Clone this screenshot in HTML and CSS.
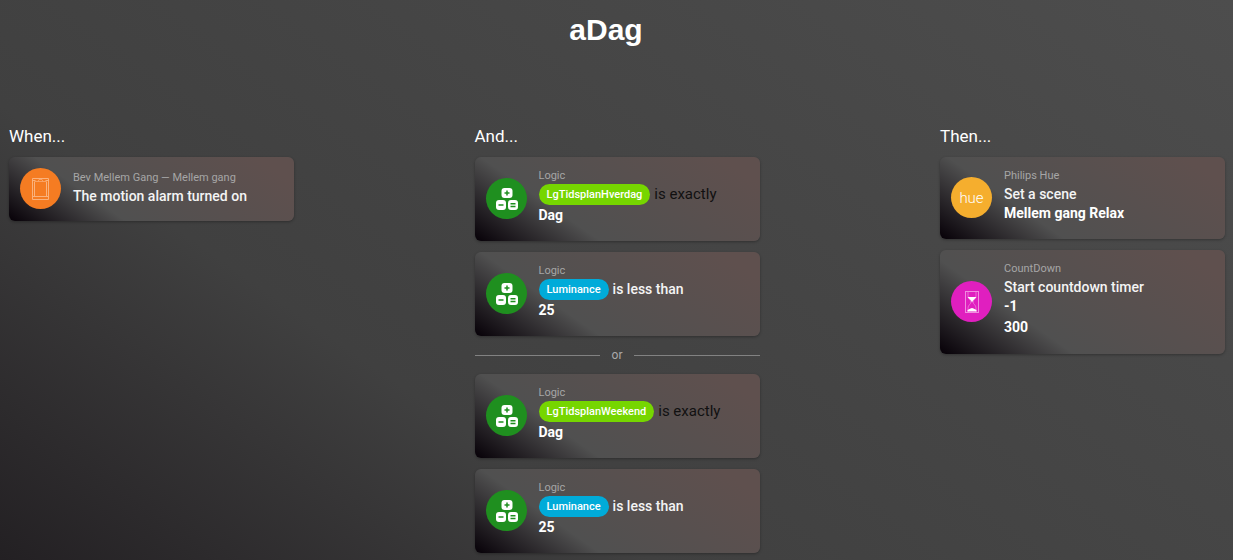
FILE: index.html
```html
<!DOCTYPE html>
<html lang="en">
<head>
    <meta charset="UTF-8">
    <meta name="viewport" content="width=device-width, initial-scale=1.0">
    <title>aDag</title>
    <link rel="stylesheet" href="styles.css">
</head>
<body>
    <!-- Calculator keys, shared by all logic cards -->
    <svg class="defs" aria-hidden="true">
        <symbol id="logicIcon" viewBox="0 0 41 41">
            <g fill="#fff">
                <rect x="15.500" y="10" width="11" height="10" rx="3"/>
                <rect x="10" y="22" width="10" height="10" rx="3"/>
                <rect x="22" y="22" width="10" height="10" rx="3"/>
            </g>
            <path d="M18.500 15h5M21 12.500v5M12.500 27h5M24.500 25.700h5M24.500 28.500h5" fill="none" stroke="#1f8f1f" stroke-width="1.500"/>
        </symbol>
    </svg>

    <h1>aDag</h1>

    <main class="flow">
        <!-- When -->
        <section class="column">
            <h2>When...</h2>
            <div class="card card-short">
                <div class="icon orange">
                    <svg viewBox="0 0 41 41" fill="none" stroke="#fab27c" stroke-width="1">
                        <path d="M12.500 10.500h16v21h-16zM14.500 13.500v15M26.500 13.500v15M12.500 28.500h16M12.500 12.500h3M25.500 12.500h3"/>
                        <path d="M15 13.500h11M18 13.500l1-2h3l1 2" stroke-width="0.700"/>
                    </svg>
                </div>
                <div class="text">
                    <div class="owner">Bev Mellem Gang — Mellem gang</div>
                    <div class="title">The motion alarm turned on</div>
                </div>
            </div>
        </section>

        <!-- And -->
        <section class="column">
            <h2>And...</h2>
            <div class="card">
                <div class="icon green"><svg><use href="#logicIcon"/></svg></div>
                <div class="text">
                    <div class="owner">Logic</div>
                    <div class="title token-row"><span class="token lime">LgTidsplanHverdag</span><span class="plain">is exactly</span></div>
                    <div class="arg">Dag</div>
                </div>
            </div>
            <div class="card">
                <div class="icon green"><svg><use href="#logicIcon"/></svg></div>
                <div class="text">
                    <div class="owner">Logic</div>
                    <div class="title token-row"><span class="token blue">Luminance</span><span>is less than</span></div>
                    <div class="arg">25</div>
                </div>
            </div>

            <div class="or">or</div>

            <div class="card">
                <div class="icon green"><svg><use href="#logicIcon"/></svg></div>
                <div class="text">
                    <div class="owner">Logic</div>
                    <div class="title token-row"><span class="token lime">LgTidsplanWeekend</span><span class="plain">is exactly</span></div>
                    <div class="arg">Dag</div>
                </div>
            </div>
            <div class="card">
                <div class="icon green"><svg><use href="#logicIcon"/></svg></div>
                <div class="text">
                    <div class="owner">Logic</div>
                    <div class="title token-row"><span class="token blue">Luminance</span><span>is less than</span></div>
                    <div class="arg">25</div>
                </div>
            </div>
        </section>

        <!-- Then -->
        <section class="column">
            <h2>Then...</h2>
            <div class="card">
                <div class="icon yellow"><span class="hue">hue</span></div>
                <div class="text">
                    <div class="owner">Philips Hue</div>
                    <div class="title">Set a scene</div>
                    <div class="arg">Mellem gang Relax</div>
                </div>
            </div>
            <div class="card">
                <div class="icon pink">
                    <svg viewBox="0 0 41 41">
                        <g fill="none" stroke="#f08be0" stroke-width="1">
                            <path d="M14 10.500h14M14 31.500h14M14.500 11v20M27.500 11v20"/>
                            <path d="M17 11v4c0 3 3 4 3 6s-3 3-3 6v4M25 11v4c0 3-3 4-3 6s3 3 3 6v4" stroke-width="0.700"/>
                        </g>
                        <path d="M16.500 16h9l-3.500 3.500-1 2-1-2zM16.500 30.500v-1.500l3-1.500 1.500-.5 1.500.5 3 1.500v1.500z" fill="#fff"/>
                    </svg>
                </div>
                <div class="text">
                    <div class="owner">CountDown</div>
                    <div class="title">Start countdown timer</div>
                    <div class="arg">-1</div>
                    <div class="arg arg-next">300</div>
                </div>
            </div>
        </section>
    </main>
</body>
</html>
```

FILE: styles.css
```css
* {
    box-sizing: border-box;
}
html {
    min-height: 100%;
    background: linear-gradient(35deg, #232023 0%, #404040 32%, #4d4d4d 100%);
}
body {
    margin: 0;
    padding: 12px 8px 7px 9px;
    font-family: Roboto, sans-serif;
    color: #fff;
}
.defs {
    display: none;
}
h1 {
    margin: 0 22px 78px 0;
    font-family: "Liberation Sans", Arial, sans-serif;
    font-size: 30px;
    line-height: 36px;
    text-align: center;
}
h2 {
    margin: 0 0 11px;
    font-size: 17px;
    font-weight: 400;
    line-height: 20px;
}
.flow {
    display: flex;
    justify-content: space-between;
    align-items: flex-start;
}
.column {
    width: 285px;
}
.card {
    display: flex;
    align-items: center;
    gap: 12px;
    padding: 0 11px;
    border-radius: 6px;
    background: linear-gradient(35deg, #060007 0%, #505050 31%, #5f504e 90%);
    box-shadow: 0 1px 3px rgba(0, 0, 0, 0.3);
}
.card + .card {
    margin-top: 11px;
}
.icon {
    display: flex;
    align-items: center;
    justify-content: center;
    flex: none;
    width: 41px;
    height: 41px;
    margin-bottom: 2px;
    border-radius: 50%;
}
.icon svg {
    width: 41px;
    height: 41px;
}
.orange {
    background-color: #f57c22;
}
.green {
    background-color: #1f8f1f;
}
.yellow {
    background-color: #f5ae2e;
}
.pink {
    background-color: #e01fbf;
}
.hue {
    padding-top: 2px;
    font-size: 15px;
    font-weight: 300;
    line-height: 20px;
}
.text {
    padding: 9px 0 16px;
    font-size: 14px;
    line-height: 19px;
}
.card-short .text {
    padding: 11px 0 15px;
}
.owner {
    font-size: 11px;
    color: #a6a6a6;
}
.title {
    font-weight: 500;
    color: #f4f4f4;
}
.token-row {
    display: flex;
    align-items: center;
    gap: 4px;
    height: 21px;
    margin: -1px 0 1px;
}
.token {
    padding: 0 8px;
    border-radius: 11px;
    font-size: 11px;
    line-height: 21px;
    color: #fff;
}
.lime {
    background-color: #76d600;
}
.blue {
    background-color: #00abd9;
}
.plain {
    font-size: 15px;
    font-weight: 400;
    color: #111;
}
.arg {
    font-weight: 700;
}
.arg-next {
    line-height: 22px;
}
.or {
    display: flex;
    align-items: center;
    gap: 12px;
    height: 38px;
    font-size: 12px;
    color: #aaa;
}
.or::before,
.or::after {
    content: "";
    flex: 1;
    height: 1px;
    background-color: #828282;
}
```
